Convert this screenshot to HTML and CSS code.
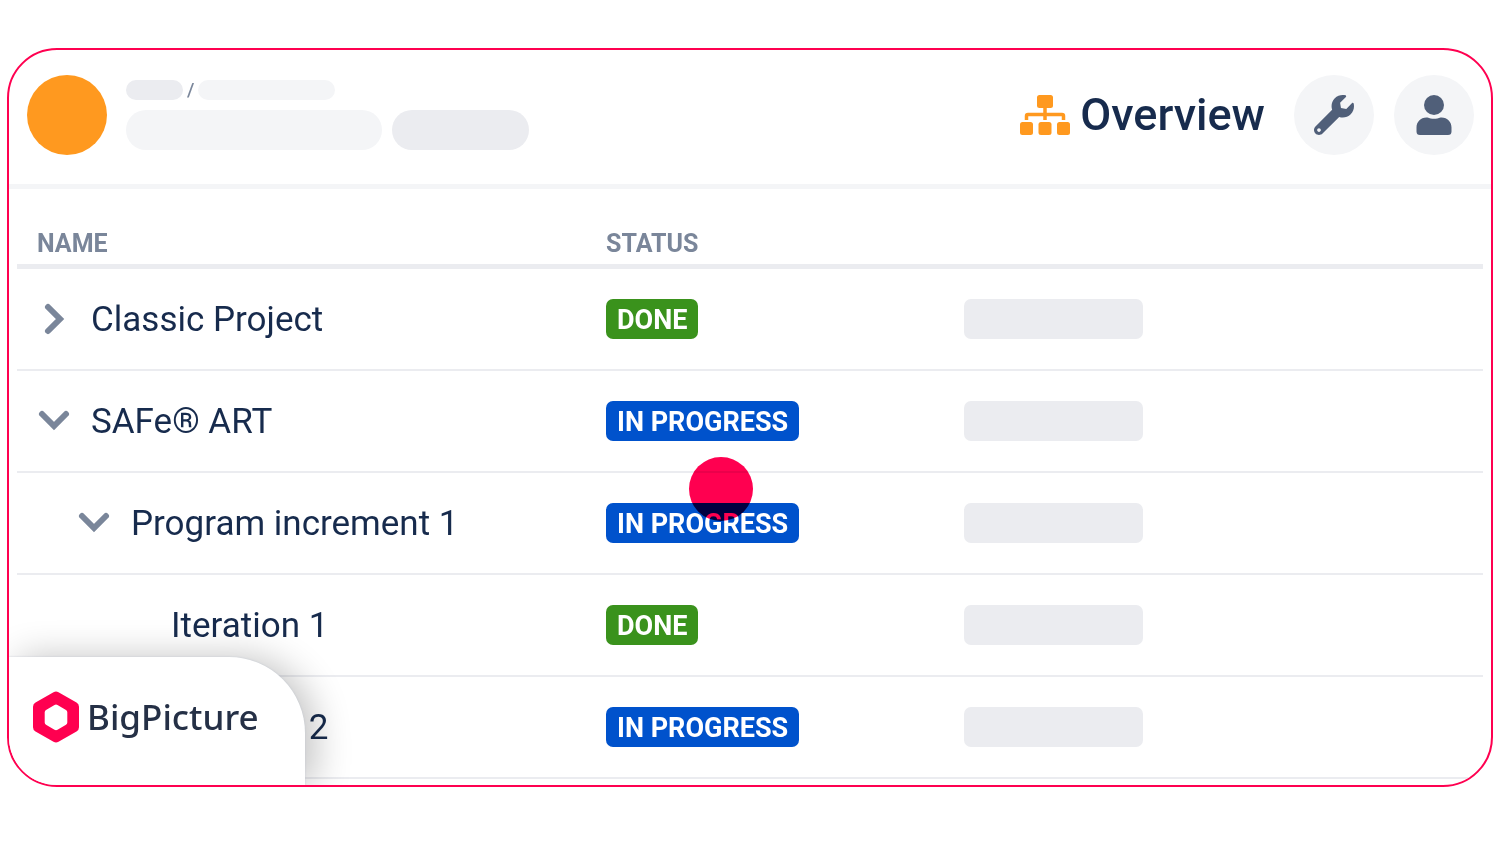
FILE: index.html
```html
<!DOCTYPE html>
<html lang="en">
<head>
<meta charset="utf-8">
<meta name="viewport" content="width=device-width, initial-scale=1">
<title>Overview</title>
<link rel="stylesheet" href="styles.css">
</head>
<body>
<main class="frame">
  <header class="header">
    <div class="avatar"></div>
    <div class="heading">
      <div class="crumbs">
        <span class="pill pill-crumb pill-dark"></span>
        <span class="slash">/</span>
        <span class="pill pill-crumb-long"></span>
      </div>
      <div class="titles">
        <span class="pill pill-title"></span>
        <span class="pill pill-action pill-dark"></span>
      </div>
    </div>
    <h1 class="overview">
      <svg class="overview-icon" viewBox="0 0 50 40" aria-hidden="true">
        <rect x="17" y="0" width="16" height="13" rx="2.5"/>
        <rect x="0" y="27" width="13" height="13" rx="2.5"/>
        <rect x="18.500" y="27" width="13" height="13" rx="2.5"/>
        <rect x="37" y="27" width="13" height="13" rx="2.5"/>
        <path d="M6.500 25V21a1.500 1.500 0 0 1 1.500-1.500H42a1.500 1.500 0 0 1 1.500 1.500V25M25 12V25" fill="none" stroke="currentColor" stroke-width="3.500"/>
      </svg>
      Overview
    </h1>
    <div class="actions">
      <button class="round" type="button" aria-label="Settings">
        <svg class="icon" viewBox="0 0 512 512" aria-hidden="true"><path d="M507.73 109.1c-2.24-9.03-13.54-12.09-20.12-5.51l-74.36 74.36-67.88-11.31-11.31-67.88 74.36-74.36c6.62-6.62 3.43-17.9-5.66-20.16-47.38-11.74-99.55.91-136.58 37.93-39.64 39.64-50.55 97.1-34.05 147.2L18.74 402.76c-24.99 24.99-24.99 65.51 0 90.5 24.99 24.99 65.51 24.99 90.5 0l213.21-213.21c50.12 16.71 107.47 5.68 147.37-34.22 37.07-37.07 49.7-89.32 37.91-136.73zM64 472c-13.25 0-24-10.75-24-24 0-13.26 10.75-24 24-24s24 10.74 24 24c0 13.25-10.75 24-24 24z"/></svg>
      </button>
      <button class="round" type="button" aria-label="Account">
        <svg class="icon" viewBox="0 0 40 40" aria-hidden="true"><circle cx="20" cy="10" r="10"/><path d="M12.500 22.500H13.500c4 1.800 9 1.800 13 0H27.500c6 0 10 4.500 10 10V36.500a3.500 3.500 0 0 1-3.500 3.500H6a3.500 3.500 0 0 1-3.500-3.500V32.500c0-5.500 4-10 10-10z"/></svg>
      </button>
    </div>
  </header>

  <div class="content">
    <table class="grid">
      <thead>
        <tr><th class="col-name" scope="col">NAME</th><th class="col-status" scope="col">STATUS</th><th class="col-extra"></th></tr>
      </thead>
      <tbody>
        <tr>
          <td><div class="name"><button class="toggle" type="button" aria-label="Expand Classic Project" aria-expanded="false"><svg class="chevron" viewBox="0 0 30 30" aria-hidden="true"><path d="M9 2L21 14L9 26"/></svg></button>Classic Project</div></td>
          <td><span class="badge done">DONE</span></td>
          <td><span class="bar"></span></td>
        </tr>
        <tr>
          <td><div class="name"><button class="toggle" type="button" aria-label="Collapse SAFe ART" aria-expanded="true"><svg class="chevron" viewBox="0 0 30 30" aria-hidden="true"><path d="M3 7L15 19L27 7"/></svg></button>SAFe® ART</div></td>
          <td><span class="badge progress">IN PROGRESS</span></td>
          <td><span class="bar"></span></td>
        </tr>
        <tr>
          <td><div class="name level-1"><button class="toggle" type="button" aria-label="Collapse Program increment 1" aria-expanded="true"><svg class="chevron" viewBox="0 0 30 30" aria-hidden="true"><path d="M3 7L15 19L27 7"/></svg></button>Program increment 1</div></td>
          <td><span class="badge progress">IN PROGRESS</span></td>
          <td><span class="bar"></span></td>
        </tr>
        <tr>
          <td><div class="name level-3">Iteration 1</div></td>
          <td><span class="badge done">DONE</span></td>
          <td><span class="bar"></span></td>
        </tr>
        <tr>
          <td><div class="name level-3">Iteration 2</div></td>
          <td><span class="badge progress">IN PROGRESS</span></td>
          <td><span class="bar"></span></td>
        </tr>
      </tbody>
    </table>
  </div>

  <div class="pointer"></div>

  <div class="brand">
    <svg class="brand-mark" viewBox="0 0 46 52" aria-hidden="true">
      <path fill-rule="evenodd" d="M20.500 1.200a5 5 0 0 1 5 0L43.500 11.500a5 5 0 0 1 2.500 4.300V36.200a5 5 0 0 1-2.500 4.300L25.500 50.800a5 5 0 0 1-5 0L2.500 40.500A5 5 0 0 1 0 36.200V15.800a5 5 0 0 1 2.500-4.300zM21.500 14L13 19a2.500 2.500 0 0 0-1.300 2.200V31.500a2.500 2.500 0 0 0 1.300 2.200L21.500 38.700a3 3 0 0 0 3 0L33 33.700a2.500 2.500 0 0 0 1.300-2.200V21.200A2.500 2.500 0 0 0 33 19L24.500 14a3 3 0 0 0-3 0z"/>
    </svg>
    <span>BigPicture</span>
  </div>
</main>
</body>
</html>
```

FILE: styles.css
```css
* {
  box-sizing: border-box;
}

body {
  margin: 0;
  padding: 48px 7px;
  background: #fff;
  color: #172b4d;
  font-family: Roboto, "Liberation Sans", sans-serif;
}

.frame {
  position: relative;
  overflow: hidden;
  padding-bottom: 6px;
  border: 2px solid #ff0050;
  border-radius: 50px;
  background: #fff;
}

.header {
  display: flex;
  align-items: center;
  padding: 25px 17px 29px 18px;
  border-bottom: 5px solid #f4f5f7;
}

.avatar {
  width: 80px;
  height: 80px;
  border-radius: 50%;
  background: #ff991f;
}

.heading {
  display: flex;
  flex: 1;
  flex-direction: column;
  gap: 10px;
  margin-left: 19px;
}

.crumbs {
  display: flex;
  align-items: center;
  gap: 4px;
  height: 20px;
}

.titles {
  display: flex;
  gap: 10px;
}

.slash {
  color: #7a869a;
  font-size: 19px;
  font-weight: 500;
  line-height: 20px;
}

.pill {
  height: 20px;
  border-radius: 20px;
  background: #f4f5f7;
}

.pill-dark {
  background: #ebecf0;
}

.pill-crumb {
  width: 57px;
}

.pill-crumb-long {
  width: 137px;
}

.pill-title {
  width: 256px;
  height: 40px;
}

.pill-action {
  width: 137px;
  height: 40px;
}

.overview {
  display: flex;
  align-items: center;
  gap: 10px;
  margin: 0 29px 0 0;
  font-size: 45px;
  font-weight: 500;
  line-height: 52px;
}

.overview-icon {
  width: 50px;
  height: 40px;
  color: #ff991f;
  fill: currentColor;
}

.actions {
  display: flex;
  gap: 20px;
}

.round {
  display: grid;
  place-items: center;
  width: 80px;
  height: 80px;
  padding: 0;
  border: 0;
  border-radius: 50%;
  background: #f4f5f7;
}

.icon {
  width: 40px;
  height: 40px;
  fill: #505f79;
}

.content {
  padding: 0 8px;
}

.grid {
  width: 100%;
  border-collapse: separate;
  border-spacing: 0;
  table-layout: fixed;
}

.col-name {
  width: 39.5%;
}

.col-status {
  width: 24.4%;
}

.grid th {
  height: 80px;
  padding: 34px 10px 0;
  border-bottom: 5px solid #ebecf0;
  color: #7a869a;
  font-size: 25px;
  font-weight: 700;
  line-height: 30px;
  text-align: left;
}

.grid td {
  height: 102px;
  padding: 0 10px;
  border-bottom: 2px solid #ebecf0;
  vertical-align: middle;
}

.grid .col-name {
  padding-left: 20px;
}

.name {
  display: flex;
  align-items: center;
  gap: 22px;
  padding: 2px 0 0 12px;
  font-size: 35px;
  line-height: 42px;
}

.level-1 {
  padding-left: 52px;
}

.level-3 {
  padding-left: 144px;
}

.toggle {
  display: grid;
  width: 30px;
  height: 30px;
  padding: 0;
  border: 0;
  background: none;
}

.chevron {
  width: 30px;
  height: 30px;
  overflow: visible;
  fill: none;
  stroke: #7a869a;
  stroke-width: 6;
  stroke-linecap: round;
}

.badge {
  display: block;
  width: fit-content;
  height: 40px;
  padding: 0 11px;
  border-radius: 7px;
  color: #fff;
  font-size: 27px;
  font-weight: 700;
  line-height: 42px;
}

.done {
  background: #3a921c;
}

.progress {
  background: #0052cc;
}

.bar {
  display: block;
  width: 179px;
  height: 40px;
  border-radius: 7px;
  background: #ebecf0;
}

.pointer {
  position: absolute;
  top: 407px;
  left: 680px;
  width: 64px;
  height: 64px;
  border-radius: 50%;
  background: #ff0050;
  mix-blend-mode: multiply;
  pointer-events: none;
}

.brand {
  position: absolute;
  bottom: 0;
  left: 0;
  display: flex;
  align-items: center;
  gap: 8px;
  width: 296px;
  height: 128px;
  padding: 0 0 8px 24px;
  border-top-right-radius: 76px;
  background: #fff;
  box-shadow: 0 0 2px #c1c7d0, 10px 0 36px rgba(0, 0, 0, 0.24);
  color: #253046;
  font-family: "Noto Sans", "Open Sans", sans-serif;
  font-size: 35px;
  font-weight: 500;
  line-height: 44px;
}

.brand-mark {
  width: 46px;
  height: 52px;
  fill: #ff0050;
}
```
